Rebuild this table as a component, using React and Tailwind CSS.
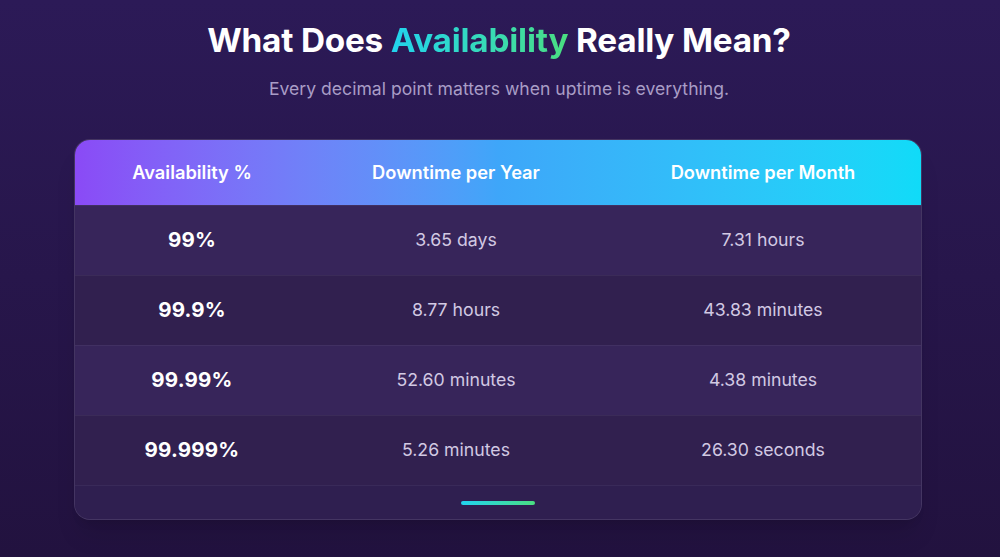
const rows = [
  { pct: "99%", year: "3.65 days", month: "7.31 hours" },
  { pct: "99.9%", year: "8.77 hours", month: "43.83 minutes" },
  { pct: "99.99%", year: "52.60 minutes", month: "4.38 minutes" },
  { pct: "99.999%", year: "5.26 minutes", month: "26.30 seconds" },
];

const App = () => {
  return (
    <div className="min-h-[557px] w-full bg-gradient-to-b from-[#2c1a57] to-[#22123f] font-['Inter',sans-serif] flex flex-col items-center pt-[18px]">
      <h1 className="mr-[2px] text-[33.3px] leading-[44px] font-bold text-white tracking-[-0.2px]">
        What Does{" "}
        <span className="bg-gradient-to-r from-[#22d3ee] to-[#4ade80] bg-clip-text text-transparent">
          Availability
        </span>{" "}
        Really Mean?
      </h1>
      <p className="mt-[15px] mr-[2px] text-[17.6px] leading-[24px] text-[#a99dc6]">
        Every decimal point matters when uptime is everything.
      </p>

      <div className="mt-[38px] mr-[4px] w-[848px] rounded-2xl border border-white/10 overflow-hidden bg-[#2f1f50] shadow-xl">
        <div className="grid grid-cols-[234px_294px_320px] h-[65px] items-center bg-gradient-to-r from-[#8a4af6] via-[#3ea6f9] to-[#10dbf8] text-white text-[18.3px] font-semibold">
          <div className="text-center">Availability %</div>
          <div className="text-center">Downtime per Year</div>
          <div className="text-center">Downtime per Month</div>
        </div>
        {rows.map((r, i) => (
          <div
            key={r.pct}
            className={`grid grid-cols-[234px_294px_320px] h-[70px] items-center border-t border-white/5 ${
              i % 2 === 0 ? "bg-[#37255a]" : "bg-[#31204f]"
            }`}
          >
            <div className="text-center text-white text-[20.5px] font-bold tracking-[0.2px]">{r.pct}</div>
            <div className="text-center text-[#d2c9e3] text-[17.7px]">{r.year}</div>
            <div className="text-center text-[#d2c9e3] text-[17.7px]">{r.month}</div>
          </div>
        ))}
        <div className="h-[34px] border-t border-white/5 bg-[#2f1f50] flex items-center justify-center">
          <div className="w-[74px] h-[4px] rounded-full bg-gradient-to-r from-[#22d3ee] to-[#4ade80]" />
        </div>
      </div>
    </div>
  );
};

export default App;
